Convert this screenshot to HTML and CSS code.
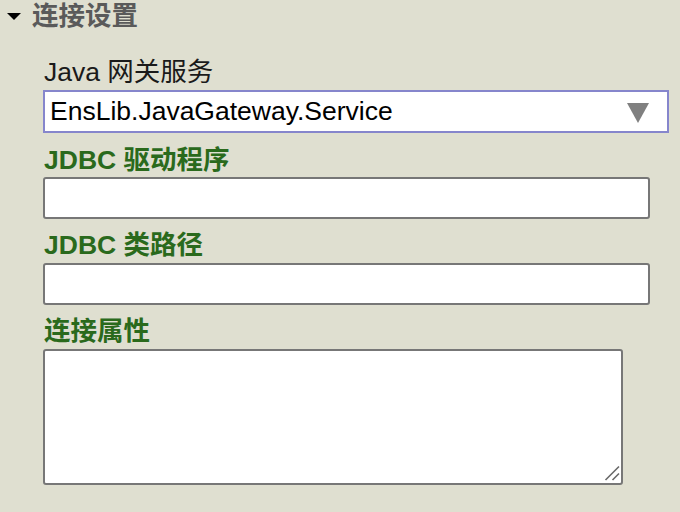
FILE: index.html
```html
<!DOCTYPE html>
<html lang="zh-CN">
<head>
<meta charset="utf-8">
<title>连接设置</title>
<link rel="stylesheet" href="styles.css">
</head>
<body>
<div class="section">
  <div class="section-header">
    <svg class="caret" width="14" height="8" viewBox="0 0 14 8"><polygon points="0,0 14,0 7,7" fill="#000"/></svg>
    <span class="section-title">连接设置</span>
  </div>
  <div class="fields">
    <label class="label label-plain">Java 网关服务</label>
    <div class="select">
      <span class="select-value">EnsLib.JavaGateway.Service</span>
      <svg class="select-arrow" width="22" height="20" viewBox="0 0 22 20"><polygon points="0,0 22,0 11,20" fill="#808080"/></svg>
    </div>
    <label class="label label-req l2">JDBC 驱动程序</label>
    <input class="text-input" type="text">
    <label class="label label-req l3">JDBC 类路径</label>
    <input class="text-input" type="text">
    <label class="label label-req l3">连接属性</label>
    <div class="area-wrap">
      <textarea class="text-area"></textarea>
      <svg class="grip" width="16" height="16" viewBox="0 0 16 16"><path d="M1.5 15 L15 1.5 M8.5 15 L15 8.5" stroke="#6a6a6a" stroke-width="1.6" fill="none"/></svg>
    </div>
  </div>
</div>
</body>
</html>
```
FILE: styles.css
```css
html, body {
  margin: 0;
  padding: 0;
  background: #dfdfd0;
}
body {
  font-family: "Liberation Sans", "Noto Sans CJK SC", sans-serif;
  font-size: 26.5px;
}
.section-header {
  display: flex;
  align-items: center;
  height: 32px;
  padding-left: 7px;
}
.caret {
  display: block;
  margin-top: 1px;
}
.section-title {
  margin-left: 11px;
  font-weight: bold;
  color: #5a5a5a;
  line-height: 32px;
}
.fields {
  display: flex;
  flex-direction: column;
  align-items: flex-start;
  padding-left: 43px;
}
.label {
  display: block;
  line-height: 30px;
  margin-left: 1px;
}
.label-plain {
  color: #1a1a1a;
  margin-top: 25px;
}
.label-req {
  color: #2a6a1c;
  font-weight: bold;
}
.l2 { margin-top: 12px; }
.l3 { margin-top: 11px; }
.select {
  box-sizing: border-box;
  width: 626px;
  height: 43px;
  margin-top: 3px;
  border: 2px solid #8686cc;
  background: #fff;
  display: flex;
  align-items: center;
  justify-content: space-between;
  padding: 0 18px 0 5px;
}
.select-value {
  color: #000;
  line-height: 39px;
}
.select-arrow {
  display: block;
  margin-top: 2px;
}
.text-input {
  box-sizing: border-box;
  width: 607px;
  height: 42px;
  margin: 2px 0 0 0;
  border: 2px solid #777;
  border-radius: 3px;
  background: #fff;
  font: inherit;
  outline: none;
}
.label-req.l3 + .text-input { margin-top: 3px; }
.area-wrap {
  position: relative;
  width: 580px;
  height: 136px;
  margin-top: 3px;
}
.text-area {
  display: block;
  box-sizing: border-box;
  width: 580px;
  height: 136px;
  margin: 0;
  border: 2px solid #777;
  border-radius: 3px;
  background: #fff;
  font: inherit;
  outline: none;
  resize: none;
}
.grip {
  position: absolute;
  right: 3px;
  bottom: 4px;
}
```
